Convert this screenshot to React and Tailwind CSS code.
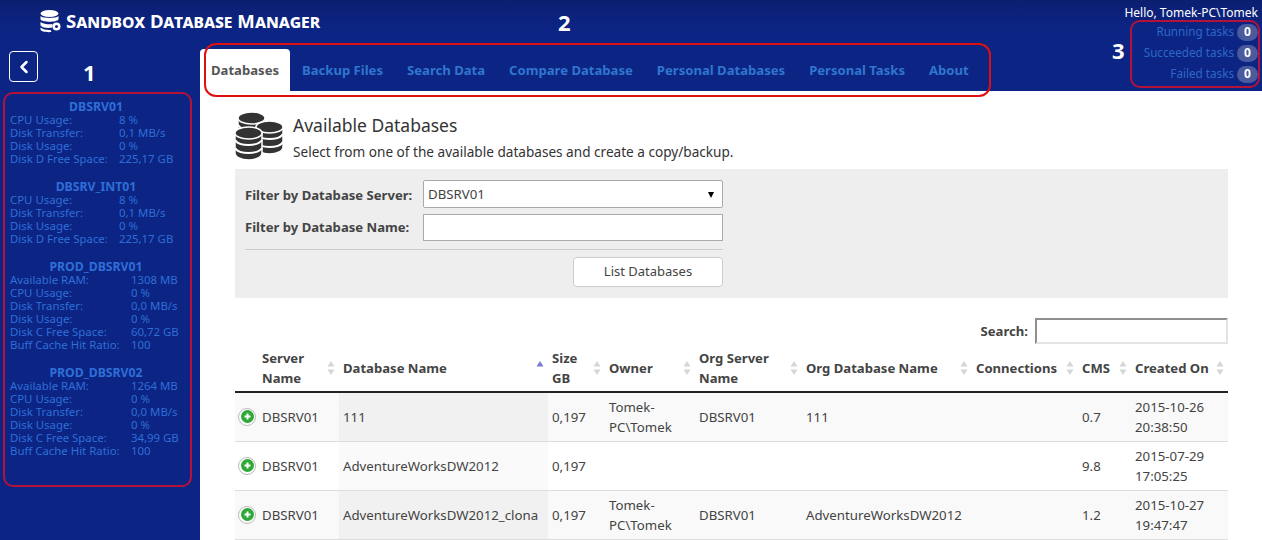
import React from "react";
import { ChevronLeft } from "lucide-react";

const font = { fontFamily: '"Noto Sans", "Open Sans", sans-serif' };

const servers = [
  {
    name: "DBSRV01",
    valueCol: "w-[109px]",
    rows: [
      ["CPU Usage:", "8 %"],
      ["Disk Transfer:", "0,1 MB/s"],
      ["Disk Usage:", "0 %"],
      ["Disk D Free Space:", "225,17 GB"],
    ],
  },
  {
    name: "DBSRV_INT01",
    valueCol: "w-[109px]",
    rows: [
      ["CPU Usage:", "8 %"],
      ["Disk Transfer:", "0,1 MB/s"],
      ["Disk Usage:", "0 %"],
      ["Disk D Free Space:", "225,17 GB"],
    ],
  },
  {
    name: "PROD_DBSRV01",
    valueCol: "w-[121px]",
    rows: [
      ["Available RAM:", "1308 MB"],
      ["CPU Usage:", "0 %"],
      ["Disk Transfer:", "0,0 MB/s"],
      ["Disk Usage:", "0 %"],
      ["Disk C Free Space:", "60,72 GB"],
      ["Buff Cache Hit Ratio:", "100"],
    ],
  },
  {
    name: "PROD_DBSRV02",
    valueCol: "w-[121px]",
    rows: [
      ["Available RAM:", "1264 MB"],
      ["CPU Usage:", "0 %"],
      ["Disk Transfer:", "0,0 MB/s"],
      ["Disk Usage:", "0 %"],
      ["Disk C Free Space:", "34,99 GB"],
      ["Buff Cache Hit Ratio:", "100"],
    ],
  },
];

const tabs = [
  "Backup Files",
  "Search Data",
  "Compare Database",
  "Personal Databases",
  "Personal Tasks",
  "About",
];

const tasks = ["Running tasks", "Succeeded tasks", "Failed tasks"];

const columns = [
  { label: ["Server", "Name"], cls: "w-[104px] pl-[27px]" },
  { label: ["Database Name"], cls: "w-[209px] pl-1", sorted: true },
  { label: ["Size", "GB"], cls: "w-[57px] pl-1" },
  { label: ["Owner"], cls: "w-[90px] pl-1" },
  { label: ["Org Server", "Name"], cls: "w-[107px] pl-1" },
  { label: ["Org Database Name"], cls: "w-[170px] pl-1" },
  { label: ["Connections"], cls: "w-[106px] pl-1" },
  { label: ["CMS"], cls: "w-[53px] pl-1" },
  { label: ["Created On"], cls: "w-[97px] pl-1" },
];

const rows = [
  ["DBSRV01", "111", "0,197", "Tomek-PC\\Tomek", "DBSRV01", "111", "", "0.7", "2015-10-26 20:38:50"],
  ["DBSRV01", "AdventureWorksDW2012", "0,197", "", "", "", "", "9.8", "2015-07-29 17:05:25"],
  ["DBSRV01", "AdventureWorksDW2012_clona", "0,197", "Tomek-PC\\Tomek", "DBSRV01", "AdventureWorksDW2012", "", "1.2", "2015-10-27 19:47:47"],
];

// one database drum, 27 wide and 33 tall, with a white edge so the stack reads
const Cylinder = ({ x, y }) => (
  <g transform={`translate(${x} ${y})`} fill="#333" stroke="#fff" strokeWidth="1.5">
    <path d="M0 6v20c0 4 6 7 13.500 7s13.500-3 13.500-7V6z" />
    <path d="M0 6c0-3.500 6-6 13.500-6s13.500 2.500 13.500 6-6 6-13.500 6S0 9.500 0 6z" />
    <path d="M0 13c2 3 7 5 13.500 5s11.500-2 13.500-5M0 21c2 3 7 5 13.500 5s11.500-2 13.500-5" fill="none" strokeWidth="2" />
  </g>
);

const SortArrows = ({ sorted }) => (
  <svg width="8" height="16" viewBox="0 0 8 16" className="shrink-0">
    <path d="M4 1l3.500 5.500h-7z" fill={sorted ? "#7b7bd6" : "#d6d6d6"} />
    {!sorted && <path d="M4 15l3.500-5.500h-7z" fill="#d6d6d6" />}
  </svg>
);

const AddIcon = () => (
  <span className="flex h-[18px] w-[18px] shrink-0 items-center justify-center rounded-full border border-[#bbb] bg-white">
    <span className="flex h-[13px] w-[13px] items-center justify-center rounded-full bg-[#2ea836]">
      <svg width="7" height="7" viewBox="0 0 7 7">
        <path d="M3.500 0.500v6M0.500 3.500h6" stroke="#fff" strokeWidth="2" />
      </svg>
    </span>
  </span>
);

export default function App() {
  return (
    <div className="relative h-[540px] w-[1262px] overflow-hidden bg-white text-[13.250px] text-[#333]" style={font}>
      {/* top bar */}
      <header className="flex h-[91px] bg-gradient-to-b from-[#0b1f70] to-[#0c2483] to-30%">
        <div className="w-[200px] shrink-0">
          <div className="ml-[40px] mt-[9px] flex items-center gap-[4px] whitespace-nowrap">
            <svg width="22" height="23" viewBox="0 0 22 23" className="shrink-0">
              <g fill="#fff">
                <ellipse cx="9.500" cy="3.500" rx="9" ry="3.500" />
                <path d="M.5 6c2 2.500 16 2.500 18 0v3.500c-2 3-16 3-18 0zM.5 12c3 2.500 10 2.500 12 2v3.500c-4 1-10 .5-12-2zM.5 17.500c3 2.500 8 2.500 10 2.500l1 2c-5 .5-11-.5-11-2.500z" />
                <circle cx="16.500" cy="16.500" r="4" />
              </g>
              <circle cx="16.500" cy="16.500" r="1.500" fill="#0c2483" />
            </svg>
            <span className="text-[18.600px] font-bold leading-6 text-white [font-variant:small-caps]">Sandbox Database Manager</span>
          </div>
          <button className="ml-[9px] mt-[18px] flex h-[31px] w-[29px] items-center justify-center rounded-[4px] border border-white text-white">
            <ChevronLeft size={20} strokeWidth={3} />
          </button>
        </div>

        <nav className="flex flex-1 items-end self-end">
          <div className="flex h-[42px] w-[90px] items-center rounded-t-[4px] bg-white pt-[2px] pl-[11px] text-[13.100px] font-bold text-[#555]">Databases</div>
          <div className="flex h-[42px] items-center gap-[24px] pt-[2px] pl-3">
            {tabs.map((t) => (
              <span key={t} className="text-[13.100px] font-bold whitespace-nowrap text-[#2f76cf]">{t}</span>
            ))}
          </div>
        </nav>

        <div className="w-[140px] shrink-0 pr-[4px] pt-[5px] text-right">
          <div className="text-[12px] leading-4 whitespace-nowrap text-white">Hello, Tomek-PC\Tomek</div>
          <div className="mt-[1px] flex flex-col gap-[1px]">
            {tasks.map((t) => (
              <div key={t} className="flex h-5 items-center justify-end gap-[3px] text-[11.700px] whitespace-nowrap text-[#2c68c8]">
                {t}
                <span className="flex h-[17px] w-[21px] items-center justify-center rounded-full bg-[#4a5a9c] text-[12px] font-bold text-white">0</span>
              </div>
            ))}
          </div>
        </div>
      </header>

      <div className="flex h-[449px]">
        {/* server stats */}
        <aside className="w-[200px] shrink-0 bg-[#0c2483] pt-[9px] pl-[10px] text-[11.400px] leading-[13px] text-[#2e6fd8]">
          {servers.map((s) => (
            <div key={s.name} className="mb-[15px] w-[172px]">
              <div className="text-center text-[12.250px] font-bold">{s.name}</div>
              {s.rows.map(([k, v]) => (
                <div key={k} className="flex whitespace-nowrap">
                  <span className={s.valueCol}>{k}</span>
                  <span>{v}</span>
                </div>
              ))}
            </div>
          ))}
        </aside>

        {/* main */}
        <main className="w-[993px] pl-[35px] pt-[22px]">
          <div className="flex h-[56px] w-[993px]">
            <svg width="48" height="50" viewBox="0 0 48 50" className="-mt-[1px] shrink-0">
              <Cylinder x={3} y={0} />
              <Cylinder x={21} y={9} />
              <Cylinder x={0} y={15} />
            </svg>
            <div className="pl-[10px]">
              <h1 className="text-[17.500px] leading-6 text-[#333]">Available Databases</h1>
              <p className="mt-[6px] text-[13.600px] leading-[18px]">Select from one of the available databases and create a copy/backup.</p>
            </div>
          </div>

          <section className="h-[129px] w-[993px] bg-[#eeeeee] pl-[10px] pt-[11px]">
            <div className="w-[478px]">
              <div className="flex h-[28px] items-center justify-between">
                <label className="pt-[3px] text-[13.100px] font-bold text-[#444]">Filter by Database Server:</label>
                <div className="flex h-[28px] w-[300px] items-center justify-between rounded-[2px] border border-[#aaa] bg-white pt-[2px] pl-[4px] pr-[5px] text-[#444]">
                  DBSRV01
                  <span className="mr-[3px] h-0 w-0 border-x-[3.500px] border-t-[6px] border-x-transparent border-t-black" />
                </div>
              </div>
              <div className="mt-[6px] flex h-[27px] items-center justify-between">
                <label className="text-[13.100px] font-bold text-[#444]">Filter by Database Name:</label>
                <input className="h-[27px] w-[300px] border border-[#aaa] bg-white" />
              </div>
              <div className="mt-[8px] border-t border-[#ccc]" />
              <div className="mt-[7px] flex justify-end">
                <button className="h-[30px] w-[150px] rounded-[4px] border border-[#ccc] bg-white text-[13px] text-[#444]">List Databases</button>
              </div>
            </div>
          </section>

          <div className="mt-[20px] flex h-[26px] w-[993px] items-center justify-end gap-[7px]">
            <label className="pt-[2px] text-[13.100px] font-bold text-[#444]">Search:</label>
            <input className="h-[26px] w-[193px] border-2 border-[#e4e4e4] border-t-[#8f8f8f] border-l-[#8f8f8f] bg-white" />
          </div>

          <table className="mt-[2px] w-[993px] table-fixed border-collapse">
            <thead>
              <tr className="h-[46px] border-b-2 border-[#222]">
                {columns.map((c) => (
                  <th key={c.label[0]} className={`${c.cls} pr-1 pb-[2px] text-left text-[13.100px] leading-5 font-bold text-[#444]`}>
                    <div className="flex items-center justify-between whitespace-nowrap">
                      <span>{c.label.map((l) => <span key={l} className="block">{l}</span>)}</span>
                      <SortArrows sorted={c.sorted} />
                    </div>
                  </th>
                ))}
              </tr>
            </thead>
            <tbody>
              {rows.map((r, i) => (
                <tr key={r[1]} className={`h-[49px] border-b border-[#ddd] ${i % 2 === 0 ? "bg-[#f9f9f9]" : "bg-white"}`}>
                  {r.map((cell, j) => (
                    <td
                      key={j}
                      className={`px-1 text-[13.250px] leading-5 text-[#444] ${j === 0 ? "pl-0" : ""} ${j === 1 ? (i % 2 === 0 ? "bg-[#f1f1f1]" : "bg-[#fafafa]") : ""}`}
                    >
                      {j === 0 ? (
                        <div className="flex items-center gap-[6px] pl-[3px]">
                          <AddIcon />
                          {cell}
                        </div>
                      ) : (
                        cell
                      )}
                    </td>
                  ))}
                </tr>
              ))}
            </tbody>
          </table>
        </main>
      </div>

      {/* annotations drawn over the screenshot */}
      <div className="absolute top-[92px] left-[3px] h-[395px] w-[189px] rounded-[10px] border-2 border-[#b5123a]" />
      <div className="absolute top-[43px] left-[204px] h-[54px] w-[787px] rounded-[12px] border-2 border-[#e01010]" />
      <div className="absolute top-[20px] left-[1130px] h-[68px] w-[130px] rounded-[10px] border-2 border-[#b5123a]" />
      <span className="absolute top-[58px] left-[83px] text-[22px] leading-7 font-bold text-white">1</span>
      <span className="absolute top-[8px] left-[558px] text-[22px] leading-7 font-bold text-white">2</span>
      <span className="absolute top-[36px] left-[1112px] text-[22px] leading-7 font-bold text-white">3</span>
    </div>
  );
}
